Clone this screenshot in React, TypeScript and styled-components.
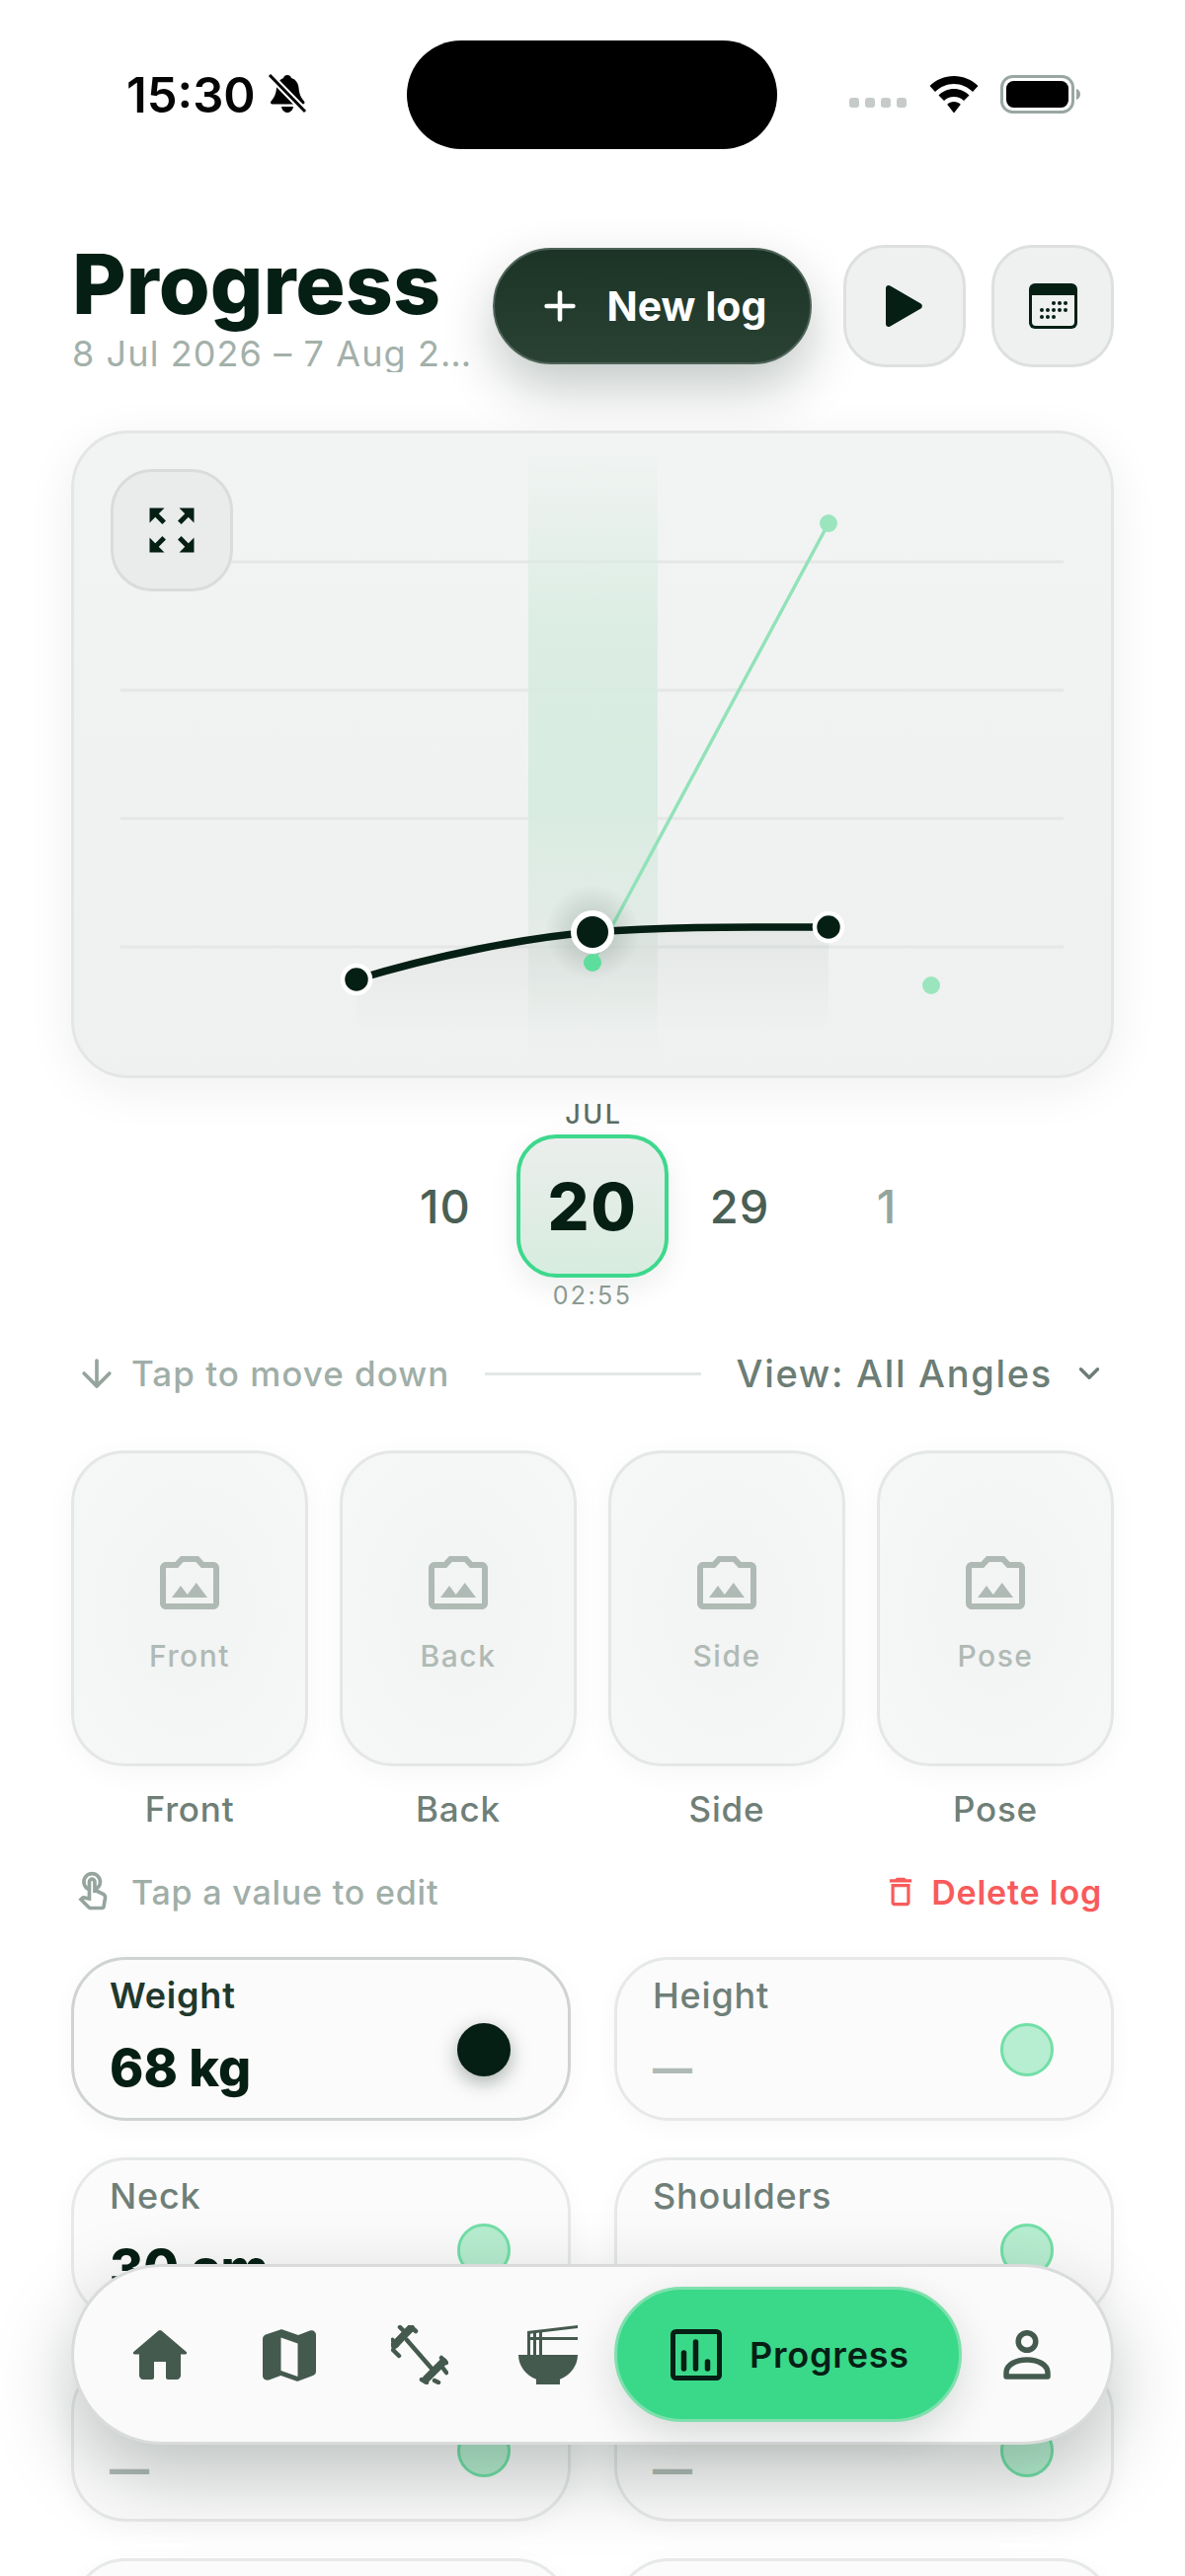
import React from "react";
import styled, { createGlobalStyle } from "styled-components";
import { ArrowDown, ChevronDown, Plus } from "lucide-react";
import { MdZoomOutMap, MdOutlinePhotoCameraBack, MdOutlineTouchApp, MdRamenDining, MdOutlineDelete } from "react-icons/md";

const Global = createGlobalStyle`
  html, body { margin: 0; padding: 0; background: #fff; }
  body { font-family: Inter, "Liberation Sans", sans-serif; }
  * { box-sizing: border-box; }
`;

const Screen = styled.div`
  position: relative;
  width: 1200px;
  height: 2609px;
  overflow: hidden;
  background: #fff;
  color: #061f14;
`;

const StatusBar = styled.div`
  height: 248px;
  padding: 41px 105px 0 128px;
  display: flex;
  align-items: flex-start;
`;
const Clock = styled.div`
  display: flex;
  align-items: center;
  gap: 12px;
  width: 284px;
  height: 110px;
  font-size: 49px;
  font-weight: 600;
  color: #050505;
`;
const Island = styled.div`
  width: 375px;
  height: 110px;
  border-radius: 55px;
  background: #000;
`;
const StatusRight = styled.div`
  flex: 1;
  height: 110px;
  display: flex;
  align-items: center;
  justify-content: flex-end;
  gap: 22px;
`;
const SignalDots = styled.div`
  display: flex;
  gap: 6px;
  margin-top: 16px;
  margin-right: 1px;
`;
const SignalDot = styled.span`
  width: 10px;
  height: 10px;
  border-radius: 3px;
  background: #c6cbc9;
`;

const Header = styled.div`
  height: 124px;
  padding: 0 72px 0 72px;
  display: flex;
  align-items: center;
`;
const TitleBlock = styled.div`
  width: 410px;
  height: 124px;
  min-width: 0;
  margin-right: 17px;
`;
const Title = styled.h1`
  margin: 0;
  font-size: 84px;
  line-height: 80px;
  font-weight: 800;
  color: #061f14;
  letter-spacing: 0;
  padding-left: 1px;
`;
const Subtitle = styled.div`
  font-size: 36px;
  line-height: 38px;
  color: #a3b0aa;
  letter-spacing: 1.1px;
  white-space: nowrap;
  overflow: hidden;
  text-overflow: ellipsis;
  padding-left: 1px;
  margin-top: 11px;
`;
const NewLog = styled.button`
  width: 324px;
  height: 118px;
  border-radius: 59px;
  border: 2px solid #4e6358;
  background: linear-gradient(180deg, #1b3427, #2a4233);
  color: #fff;
  font: 700 41px Inter, sans-serif;
  display: flex;
  align-items: center;
  justify-content: center;
  gap: 24px;
  padding: 0 0 0 0;
  margin-right: 32px;
  box-shadow: 0 24px 54px rgba(6, 31, 20, 0.24);
`;
const RoundButton = styled.button<{ $gap?: number }>`
  width: 124px;
  height: 124px;
  border-radius: 42px;
  border: 3px solid #dde0df;
  background: #eff1f1;
  display: flex;
  align-items: center;
  justify-content: center;
  padding: 0;
  margin-right: ${(p) => p.$gap ?? 0}px;
`;

const ChartCard = styled.section`
  position: relative;
  height: 656px;
  margin: 64px 72px 0;
  border-radius: 58px;
  border: 3px solid #e3e6e5;
  background: linear-gradient(180deg, #f2f4f3, #eff1f0);
  box-shadow: 0 10px 50px rgba(6, 31, 20, 0.07);
  overflow: hidden;
`;
const ChartSvg = styled.svg`
  display: block;
  width: 100%;
  height: 100%;
`;
const ExpandButton = styled.button`
  position: absolute;
  left: 37px;
  top: 36px;
  width: 124px;
  height: 124px;
  border-radius: 42px;
  border: 3px solid #d9dcdb;
  background: #eaecec;
  color: #061f14;
  display: flex;
  align-items: center;
  justify-content: center;
  padding: 0;
`;

const Wheel = styled.div`
  display: grid;
  grid-template-columns: repeat(5, 149px);
  justify-content: center;
  align-items: center;
  margin-top: 17px;
`;
const WheelCell = styled.div`
  display: flex;
  flex-direction: column;
  align-items: center;
`;
const Month = styled.div`
  font-size: 27px;
  line-height: 40px;
  font-weight: 500;
  letter-spacing: 2.5px;
  padding-left: 3px;
  color: #5d6e65;
`;
const DayBox = styled.div`
  width: 154px;
  height: 145px;
  border-radius: 40px;
  border: 4px solid #3dd88d;
  background: linear-gradient(180deg, #ebeeec, #d7ecdf);
  box-shadow: 0 10px 30px rgba(6, 31, 20, 0.08);
  display: flex;
  align-items: center;
  justify-content: center;
  font-size: 66px;
  font-weight: 800;
  letter-spacing: 1.5px;
  color: #061f14;
`;
const Time = styled.div`
  font-size: 25px;
  line-height: 36px;
  letter-spacing: 2.4px;
  color: #8a9a92;
`;
const DayNumber = styled.div<{ $far?: boolean }>`
  font-size: 47px;
  font-weight: 500;
  letter-spacing: 1px;
  text-align: center;
  margin-top: 4px;
  color: ${(p) => (p.$far ? "#95a59d" : "#4a5f54")};
`;

const DividerRow = styled.div`
  display: flex;
  align-items: center;
  height: 52px;
  margin: 35px 72px 0;
  padding: 0 8px 0 4px;
`;
const HintText = styled.span`
  font-size: 35px;
  font-weight: 500;
  color: #a0aea8;
  letter-spacing: 1px;
  margin-left: 13px;
  white-space: nowrap;
`;
const Rule = styled.div`
  flex: 1;
  height: 3px;
  margin: 0 36px;
  background: #e3e7e5;
`;
const ViewLabel = styled.span`
  font-size: 38px;
  font-weight: 500;
  color: #6c7d75;
  letter-spacing: 1.7px;
  white-space: nowrap;
  margin-right: 20px;
`;

const PhotoGrid = styled.div`
  display: grid;
  grid-template-columns: repeat(4, 240px);
  justify-content: space-between;
  margin: 52px 72px 0;
`;
const PhotoColumn = styled.div`
  display: flex;
  flex-direction: column;
  align-items: center;
`;
const PhotoCard = styled.div`
  width: 240px;
  height: 320px;
  border-radius: 54px;
  border: 3px solid #e4e7e6;
  background: radial-gradient(ellipse at center, #f2f3f3 0%, #f6f7f7 100%);
  box-shadow: 0 6px 30px rgba(6, 31, 20, 0.04);
  display: flex;
  flex-direction: column;
  align-items: center;
  justify-content: center;
  gap: 20px;
  padding-top: 4px;
  color: #b0bab5;
`;
const PhotoHint = styled.div`
  font-size: 30px;
  font-weight: 500;
  letter-spacing: 1.5px;
  color: #b0bab5;
`;
const PhotoLabel = styled.div`
  font-size: 35px;
  line-height: 40px;
  font-weight: 500;
  letter-spacing: 0.8px;
  color: #6f7f78;
  margin-top: 23px;
`;

const EditRow = styled.div`
  display: flex;
  align-items: center;
  height: 44px;
  margin: 42px 72px 0;
  padding: 0 12px 0 0;
`;
const EditHint = styled.span`
  flex: 1;
  font-size: 34px;
  font-weight: 500;
  letter-spacing: 0.8px;
  color: #a0aea8;
  margin-left: 17px;
`;
const DeleteText = styled.span`
  font-size: 34px;
  font-weight: 600;
  letter-spacing: 0.8px;
  color: #f85b5b;
  margin-left: 12px;
`;

const MetricGrid = styled.div`
  display: grid;
  grid-template-columns: 506px 506px;
  justify-content: space-between;
  row-gap: 37px;
  margin: 44px 72px 0;
`;
const MetricCard = styled.div<{ $active?: boolean }>`
  position: relative;
  height: 166px;
  border-radius: 56px;
  border: 3px solid ${(p) => (p.$active ? "#cfd3d1" : "#e6e9e8")};
  background: #fbfbfb;
  box-shadow: 0 6px 26px rgba(6, 31, 20, 0.035);
  padding: 17px 58px 0 36px;
  display: flex;
  justify-content: space-between;
  align-items: center;
`;
const MetricText = styled.div`
  align-self: flex-start;
`;
const MetricLabel = styled.div<{ $active?: boolean }>`
  font-size: 36px;
  line-height: 38px;
  font-weight: ${(p) => (p.$active ? 600 : 500)};
  color: ${(p) => (p.$active ? "#21382c" : "#6f7f78")};
  letter-spacing: 0.8px;
`;
const MetricValue = styled.div<{ $empty?: boolean }>`
  font-size: ${(p) => (p.$empty ? 40 : 52)}px;
  line-height: 60px;
  font-weight: ${(p) => (p.$empty ? 800 : 800)};
  color: ${(p) => (p.$empty ? "#b0bab5" : "#061f14")};
  margin-top: 25px;
`;
const MetricDot = styled.span<{ $active?: boolean }>`
  width: 54px;
  height: 54px;
  margin-top: 4px;
  border-radius: 50%;
  flex: none;
  background: ${(p) => (p.$active ? "#061f14" : "#b7edd0")};
  border: 3px solid ${(p) => (p.$active ? "#061f14" : "#72dfa7")};
  box-shadow: ${(p) => (p.$active ? "0 6px 20px rgba(6,31,20,.35)" : "none")};
`;

const Nav = styled.nav`
  position: absolute;
  left: 72px;
  right: 72px;
  top: 2293px;
  height: 183px;
  border-radius: 92px;
  border: 3px solid #d9dcdb;
  background: #fafafa;
  box-shadow: 0 30px 80px rgba(6, 31, 20, 0.26);
  display: flex;
  align-items: center;
  padding: 0 0 0 59px;
`;
const NavIconSlot = styled.div<{ $w: number }>`
  width: ${(p) => p.$w}px;
  display: flex;
  align-items: center;
  color: #455a4e;
`;
const NavPill = styled.div`
  width: 352px;
  height: 137px;
  border-radius: 69px;
  border: 3px solid #7fe0ad;
  background: #3ad98a;
  box-shadow: 0 14px 40px rgba(6, 31, 20, 0.14);
  display: flex;
  align-items: center;
  padding-left: 54px;
  margin-right: 42px;
  color: #061f14;
`;
const NavPillText = styled.span`
  font-size: 36px;
  font-weight: 600;
  letter-spacing: 0.8px;
  margin-left: 28px;
`;

const grid = [130, 260, 390, 520];
const CX = (x: number) => x - 75;
const CY = (y: number) => y - 439;

const metrics: { label: string; value: string; active?: boolean }[] = [
  { label: "Weight", value: "68 kg", active: true },
  { label: "Height", value: "—" },
  { label: "Neck", value: "30 cm" },
  { label: "Shoulders", value: "—" },
  { label: "Chest", value: "—" },
  { label: "Waist", value: "—" },
  { label: "Hips", value: "—" },
  { label: "Thigh", value: "—" },
];

function BellOff() {
  return (
    <svg width="40" height="42" viewBox="0 0 40 42">
      <path d="M20 1c2 0 3.500 1.200 4 3 5 1.500 7 5.500 7.500 10 .5 6 2 9.500 5.500 13.500 1 1.300.5 3-1.500 3H5c-2 0-2.500-1.700-1.500-3C7 23.500 8.500 20 9 14c.5-4.500 3-8.500 7-10 .5-1.800 2-3 4-3z" fill="#000" />
      <path d="M14 33h12c-.5 3.500-3 6-6 6s-5.500-2.500-6-6z" fill="#000" />
      <path d="M3 2l35 36" stroke="#fff" strokeWidth="7" />
      <path d="M2 1l36 37" stroke="#000" strokeWidth="3" />
    </svg>
  );
}

function Wifi() {
  return (
    <svg width="50" height="38" viewBox="0 0 50 38">
      <path d="M25 0c9.500 0 18 3.700 24.500 10L44 16C39 11 32.500 8 25 8S11 11 6 16L.5 10C7 3.700 15.500 0 25 0z" fill="#000" />
      <path d="M25 13c6 0 11.500 2.500 15.500 6.500L35 25c-2.600-2.600-6-4-10-4s-7.400 1.400-10 4l-5.500-5.500C13.500 15.500 19 13 25 13z" fill="#000" />
      <path d="M25 26c2.600 0 5 1 6.800 2.800L25 37.500l-6.800-8.700C20 27 22.400 26 25 26z" fill="#000" />
    </svg>
  );
}

function Battery() {
  return (
    <svg width="82" height="40" viewBox="0 0 82 40">
      <rect x="1.500" y="1.500" width="72" height="36" rx="11" fill="none" stroke="#9aa7a1" strokeWidth="3" />
      <rect x="6" y="6" width="63" height="27" rx="7.500" fill="#000" />
      <path d="M77 14c2.500.8 4 3 4 5.500S79.500 24.200 77 25z" fill="#9aa7a1" />
    </svg>
  );
}

function PlayIcon() {
  return (
    <svg width="42" height="44" viewBox="0 0 42 44">
      <path d="M2 4c0-2.500 2.500-3.800 4.500-2.500l31 18c1.800 1.100 1.800 3.900 0 5l-31 18C4.500 43.800 2 42.500 2 40z" fill="#061f14" />
    </svg>
  );
}

function CalendarIcon() {
  const dots = [
    [31, 18], [37, 18], [43, 18], [19, 25], [25, 25], [31, 25], [37, 25], [43, 25], [19, 32], [25, 32], [31, 32],
  ];
  return (
    <svg width="49" height="46" viewBox="0 0 49 46">
      <rect x="0" y="0" width="49" height="46" rx="6" fill="#061f14" />
      <path d="M3 12h43v27a4 4 0 0 1-4 4H7a4 4 0 0 1-4-4z" fill="#eff1f1" />
      {dots.map(([x, y]) => (
        <circle key={`${x}-${y}`} cx={x - 6} cy={y + 2} r="2" fill="#061f14" />
      ))}
    </svg>
  );
}

function HomeIcon() {
  return (
    <svg width="56" height="50" viewBox="0 0 56 50">
      <path d="M28 0c.6 0 1.100.2 1.500.6L54.700 22c1 .9.400 2.500-1 2.500H49V46c0 2.200-1.800 4-4 4h-9c-1 0-2-1-2-2V32H22v16c0 1-1 2-2 2h-9c-2.200 0-4-1.800-4-4V24.500H2.300c-1.400 0-2-1.600-1-2.500L26.500.6c.4-.4.900-.6 1.500-.6z" fill="currentColor" />
    </svg>
  );
}

function MapIcon() {
  return (
    <svg width="54" height="54" viewBox="0 0 54 54">
      <path d="M18 1.500c.7-.3 1.500-.3 2.300 0l15.700 5.500 11.800-4.500C50.800 1.500 54 3.500 54 6.800v37c0 2-1.200 3.600-3 4.300l-14.700 5.400c-.8.300-1.600.3-2.300 0l-15.700-5.500-11.300 4.300C3.500 53.500 0 51.500 0 48V11c0-2 1.200-3.700 3-4.400zM18.500 9.500v33.500l17 6V15.500z" fill="currentColor" fillRule="evenodd" />
    </svg>
  );
}

function DumbbellIcon() {
  return (
    <svg width="58" height="60" viewBox="0 0 58 60" fill="none" stroke="currentColor" strokeLinecap="round">
      <path d="M16 15L43 46" strokeWidth="4.500" />
      <path d="M3.500 20L20 3" strokeWidth="8" />
      <path d="M2 25L8 31" strokeWidth="4.500" />
      <path d="M9 2L14 7" strokeWidth="4.500" />
      <path d="M1.500 15L6 20" strokeWidth="4.500" />
      <path d="M20 1.500L25 6" strokeWidth="4.500" />
      <path d="M36 54L53 37" strokeWidth="8" />
      <path d="M51 33L56 38" strokeWidth="4.500" />
      <path d="M31 55L36 58" strokeWidth="4.500" />
      <path d="M44 56L48 58" strokeWidth="4.500" />
      <path d="M53 44L56 48" strokeWidth="4.500" />
    </svg>
  );
}

function ProgressIcon() {
  return (
    <svg width="52" height="52" viewBox="0 0 52 52" fill="none" stroke="#061f14">
      <rect x="2.500" y="2.500" width="47" height="47" rx="3" strokeWidth="5" />
      <path d="M13.500 24v16" strokeWidth="5.500" strokeLinecap="round" />
      <path d="M25.500 13v27" strokeWidth="5.500" strokeLinecap="round" />
      <path d="M37.500 33v7" strokeWidth="5.500" strokeLinecap="round" />
    </svg>
  );
}

function UserIcon() {
  return (
    <svg width="48" height="50" viewBox="0 0 48 50" fill="none" stroke="currentColor" strokeWidth="5.500">
      <circle cx="24" cy="11.500" r="8.800" />
      <path d="M3 47v-4c0-8 10-13 21-13s21 5 21 13v4z" strokeLinejoin="round" />
    </svg>
  );
}

export default function App() {
  return (
    <Screen>
      <Global />
      <StatusBar>
        <Clock>
          15:30
          <BellOff />
        </Clock>
        <Island />
        <StatusRight>
          <SignalDots>
            <SignalDot />
            <SignalDot />
            <SignalDot />
            <SignalDot />
          </SignalDots>
          <Wifi />
          <Battery />
        </StatusRight>
      </StatusBar>

      <Header>
        <TitleBlock>
          <Title>Progress</Title>
          <Subtitle>8 Jul 2026 – 7 Aug 2026</Subtitle>
        </TitleBlock>
        <NewLog>
          <Plus size={46} strokeWidth={2.4} />
          New log
        </NewLog>
        <RoundButton $gap={26}>
          <PlayIcon />
        </RoundButton>
        <RoundButton>
          <CalendarIcon />
        </RoundButton>
      </Header>

      <ChartCard>
        <ChartSvg viewBox="0 0 1050 650" preserveAspectRatio="none">
          <defs>
            <linearGradient id="band" x1="0" y1="0" x2="0" y2="1">
              <stop offset="0" stopColor="#d8ece1" stopOpacity="0" />
              <stop offset="0.3" stopColor="#d8ece1" stopOpacity="0.85" />
              <stop offset="0.58" stopColor="#d8ece1" stopOpacity="1" />
              <stop offset="0.82" stopColor="#e0e9e4" stopOpacity="0.7" />
              <stop offset="1" stopColor="#e0e9e4" stopOpacity="0" />
            </linearGradient>
            <linearGradient id="area" x1="0" y1="0" x2="0" y2="1">
              <stop offset="0" stopColor="#061f14" stopOpacity="0.05" />
              <stop offset="1" stopColor="#061f14" stopOpacity="0" />
            </linearGradient>
            <radialGradient id="halo">
              <stop offset="0.4" stopColor="#061f14" stopOpacity="0.12" />
              <stop offset="1" stopColor="#061f14" stopOpacity="0" />
            </radialGradient>
          </defs>
          {grid.map((y) => (
            <line key={y} x1={CX(122)} x2={CX(1077)} y1={CY(439 + y)} y2={CY(439 + y)} stroke="#e4e7e6" strokeWidth="3" />
          ))}
          <rect x={CX(535)} y={CY(445)} width="131" height="630" fill="url(#band)" />
          <path
            d={`M${CX(361)} ${CY(992)} C${CX(440)} ${CY(968)} ${CX(530)} ${CY(950)} ${CX(600)} ${CY(944)} C${CX(680)} ${CY(938)} ${CX(760)} ${CY(939)} ${CX(839)} ${CY(939)} V${CY(1045)} H${CX(361)} Z`}
            fill="url(#area)"
          />
          <line x1={CX(600)} y1={CY(975)} x2={CX(839)} y2={CY(530)} stroke="#92e2b9" strokeWidth="3.500" />
          <circle cx={CX(839)} cy={CY(530)} r="9" fill="#9be5be" />
          <circle cx={CX(943)} cy={CY(998)} r="9" fill="#9be5be" />
          <circle cx={CX(600)} cy={CY(944)} r="48" fill="url(#halo)" />
          <circle cx={CX(600)} cy={CY(975)} r="9" fill="#5ede9c" />
          <path
            d={`M${CX(361)} ${CY(992)} C${CX(440)} ${CY(968)} ${CX(530)} ${CY(950)} ${CX(600)} ${CY(944)} C${CX(680)} ${CY(938)} ${CX(760)} ${CY(939)} ${CX(839)} ${CY(939)}`}
            fill="none"
            stroke="#061f14"
            strokeWidth="7.500"
          />
          <circle cx={CX(361)} cy={CY(992)} r="14" fill="#061f14" stroke="#fff" strokeWidth="4.500" />
          <circle cx={CX(839)} cy={CY(939)} r="14" fill="#061f14" stroke="#fff" strokeWidth="4.500" />
          <circle cx={CX(600)} cy={CY(944)} r="19" fill="#061f14" stroke="#fff" strokeWidth="6" />
        </ChartSvg>
        <ExpandButton>
          <MdZoomOutMap size={60} />
        </ExpandButton>
      </ChartCard>

      <Wheel>
        <WheelCell />
        <DayNumber>10</DayNumber>
        <WheelCell>
          <Month>JUL</Month>
          <DayBox>20</DayBox>
          <Time>02:55</Time>
        </WheelCell>
        <DayNumber>29</DayNumber>
        <DayNumber $far>1</DayNumber>
      </Wheel>

      <DividerRow>
        <ArrowDown size={44} color="#95a59d" strokeWidth={2} />
        <HintText>Tap to move down</HintText>
        <Rule />
        <ViewLabel>View: All Angles</ViewLabel>
        <ChevronDown size={34} color="#6c7d75" strokeWidth={2.4} />
      </DividerRow>

      <PhotoGrid>
        {["Front", "Back", "Side", "Pose"].map((name) => (
          <PhotoColumn key={name}>
            <PhotoCard>
              <MdOutlinePhotoCameraBack size={72} />
              <PhotoHint>{name}</PhotoHint>
            </PhotoCard>
            <PhotoLabel>{name}</PhotoLabel>
          </PhotoColumn>
        ))}
      </PhotoGrid>

      <EditRow>
        <MdOutlineTouchApp size={44} color="#95a59d" />
        <EditHint>Tap a value to edit</EditHint>
        <MdOutlineDelete size={38} color="#f85b5b" />
        <DeleteText>Delete log</DeleteText>
      </EditRow>

      <MetricGrid>
        {metrics.map((m) => (
          <MetricCard key={m.label} $active={m.active}>
            <MetricText>
              <MetricLabel $active={m.active}>{m.label}</MetricLabel>
              <MetricValue $empty={m.value === "—"}>{m.value}</MetricValue>
            </MetricText>
            <MetricDot $active={m.active} />
          </MetricCard>
        ))}
      </MetricGrid>

      <Nav>
        <NavIconSlot $w={132}>
          <HomeIcon />
        </NavIconSlot>
        <NavIconSlot $w={130}>
          <MapIcon />
        </NavIconSlot>
        <NavIconSlot $w={123}>
          <DumbbellIcon />
        </NavIconSlot>
        <NavIconSlot $w={103}>
          <MdRamenDining size={72} />
        </NavIconSlot>
        <NavPill>
          <ProgressIcon />
          <NavPillText>Progress</NavPillText>
        </NavPill>
        <NavIconSlot $w={48}>
          <UserIcon />
        </NavIconSlot>
      </Nav>
    </Screen>
  );
}
